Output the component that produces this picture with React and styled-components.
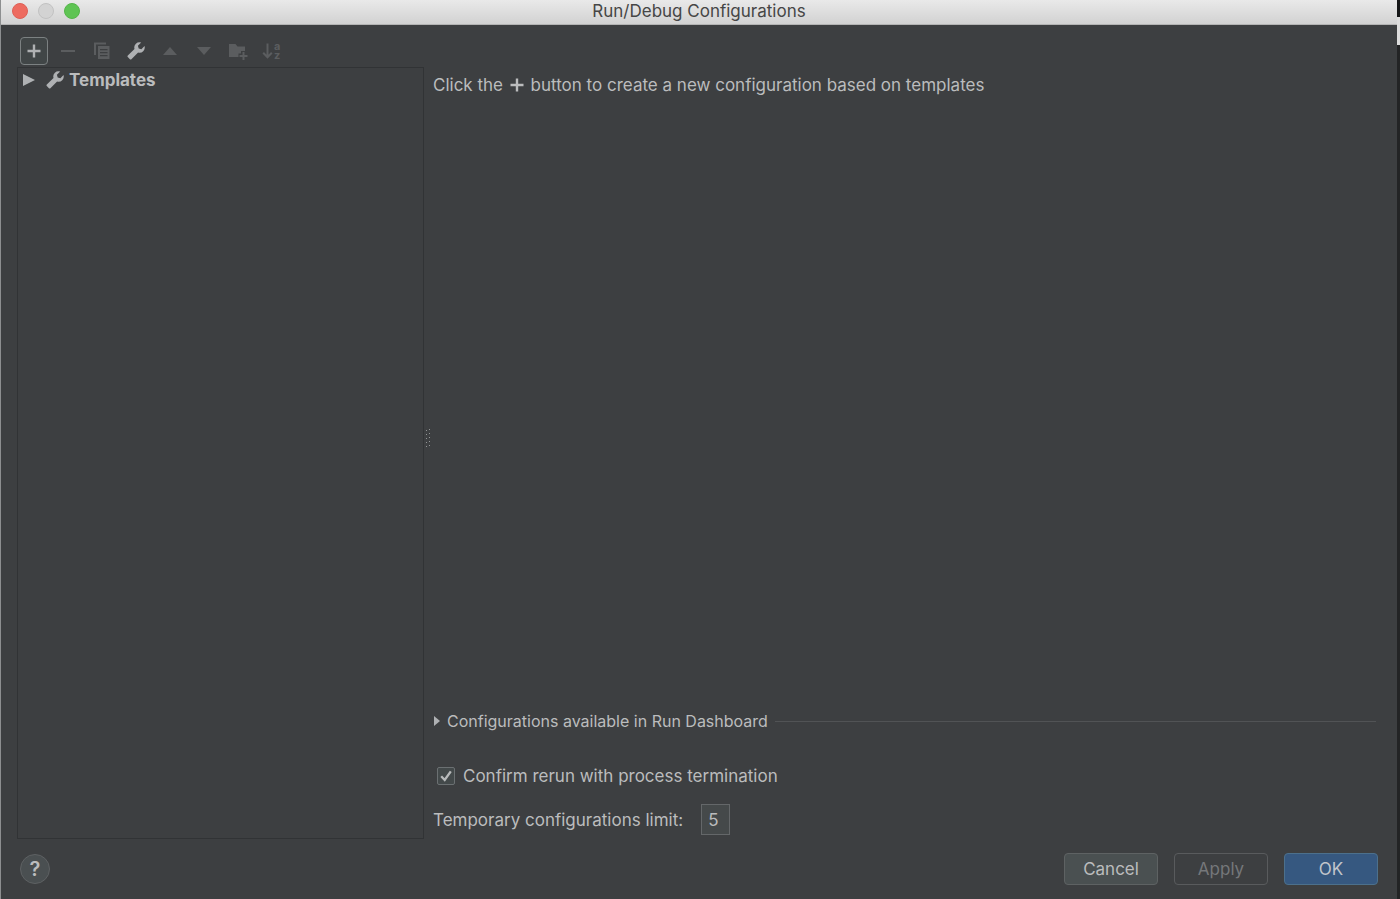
import React, { useState } from 'react';
import styled, { createGlobalStyle } from 'styled-components';

const FONT_FAMILY = "Inter, Roboto, 'Liberation Sans', sans-serif";
const PANEL_COLOR = '#3d3f41';
const TEXT_COLOR = '#bbbcbd';
const ICON_COLOR = '#afb1b3';
const DISABLED_COLOR = '#5b5d5f';
const BORDER_COLOR = '#5e6163';
const LINE_COLOR = '#313335';

const GlobalStyle = createGlobalStyle`
    * {
        box-sizing: border-box;
    }

    body {
        margin: 0;
        background: ${PANEL_COLOR};
    }

    button,
    input {
        font: inherit;
        color: inherit;
    }
`;

const Desktop = styled.div`
    min-height: 100vh;
    display: flex;
    padding: 0 3px 0 1px;
    background:
        linear-gradient(#8d8f90, #8d8f90) left / 1px 100% no-repeat,
        linear-gradient(
                #151617 0,
                #151617 17px,
                #dcdcdc 17px,
                #dcdcdc 45px,
                #232425 45px
            )
            right / 3px 100% no-repeat;
`;

const Dialog = styled.div`
    flex: 1;
    min-width: 0;
    display: flex;
    flex-direction: column;
    background: ${PANEL_COLOR};
    color: ${TEXT_COLOR};
    font-family: ${FONT_FAMILY};
    font-size: 17px;
    line-height: 20px;
`;

const TitleBar = styled.header`
    display: grid;
    grid-template-columns: 1fr auto 1fr;
    align-items: center;
    height: 25px;
    padding: 0 11px 2px;
    background: linear-gradient(#e9e9e9, #d2d2d2);
    border-bottom: 1px solid #b4b4b4;
`;

const Title = styled.h1`
    margin: 0;
    color: #464646;
    font-size: 17px;
    font-weight: 400;
    line-height: 20px;
`;

const WindowControls = styled.div`
    display: flex;
    gap: 10px;
`;

const WindowControl = styled.button`
    width: 16px;
    height: 16px;
    padding: 0;
    border: 1px solid ${(props) => props.$border};
    border-radius: 50%;
    background: ${(props) => props.$color};
`;

const Content = styled.div`
    flex: 1;
    display: flex;
    padding: 12px 20px 14px 16px;
`;

const Sidebar = styled.aside`
    flex: 0 0 407px;
    display: flex;
    flex-direction: column;
    gap: 2px;
`;

const Toolbar = styled.div`
    display: flex;
    gap: 6px;
    padding-left: 3px;
`;

const ToolButton = styled.button`
    display: flex;
    align-items: center;
    justify-content: center;
    width: 28px;
    height: 28px;
    padding: 0;
    border: 1px solid ${(props) => (props.$active ? '#7c8182' : 'transparent')};
    border-radius: 4px;
    background: ${(props) => (props.$active ? '#414647' : 'transparent')};
    color: ${(props) => (props.disabled ? DISABLED_COLOR : ICON_COLOR)};

    svg {
        flex: none;
    }
`;

const Tree = styled.div`
    flex: 1;
    border: 1px solid ${LINE_COLOR};
`;

const TreeRow = styled.button`
    display: flex;
    align-items: center;
    width: 100%;
    height: 24px;
    padding: 0 5px;
    border: 0;
    background: none;
    font-size: 17px;
    font-weight: 700;
    text-align: left;

    .arrow {
        margin-right: 11px;
    }

    .wrench {
        margin-right: 5px;
        color: ${ICON_COLOR};
    }
`;

const Splitter = styled.div`
    flex: 0 0 9px;
    display: flex;
    align-items: center;
    justify-content: flex-start;
`;

const Main = styled.main`
    flex: 1;
    min-width: 0;
    display: flex;
    flex-direction: column;
    padding-bottom: 4px;
`;

const Hint = styled.p`
    flex: 1;
    margin: 0;
    padding-top: 38px;

    svg {
        margin: 0 2px;
        vertical-align: -1px;
    }
`;

const Disclosure = styled.button`
    display: flex;
    align-items: center;
    gap: 7px;
    width: 100%;
    padding: 0 1px;
    border: 0;
    background: none;
    font-size: 16px;
    text-align: left;

    &::after {
        content: '';
        flex: 1;
        height: 1px;
        background: #515355;
    }
`;

const CheckRow = styled.label`
    display: flex;
    align-items: center;
    gap: 8px;
    margin: 35px 0 18px;
    padding-left: 4px;
`;

const CheckBox = styled.span`
    display: grid;
    width: 18px;
    height: 18px;

    > * {
        grid-area: 1 / 1;
    }

    input {
        appearance: none;
        width: 18px;
        height: 18px;
        margin: 0;
        border: 1px solid #6b7072;
        border-radius: 2px;
        background: #43494a;
    }

    svg {
        display: none;
        z-index: 1;
        pointer-events: none;
    }

    input:checked + svg {
        display: block;
    }
`;

const LimitRow = styled.div`
    display: flex;
    align-items: center;
    gap: 18px;
`;

const LimitInput = styled.input`
    width: 29px;
    height: 31px;
    padding: 0 6px;
    border: 1px solid #646769;
    border-radius: 0;
    background: #45494a;
    outline: none;
`;

const Footer = styled.footer`
    display: flex;
    align-items: center;
    gap: 16px;
    padding: 0 19px 14px;
`;

const HelpButton = styled.button`
    width: 30px;
    height: 30px;
    margin-right: auto;
    padding: 0;
    border: 1px solid ${BORDER_COLOR};
    border-radius: 50%;
    background: #4a4f51;
    font-size: 20px;
    font-weight: 600;
`;

const variants = {
    normal: { background: '#4a5051', border: '#5e6263', color: TEXT_COLOR },
    disabled: { background: PANEL_COLOR, border: '#595b5d', color: '#75777a' },
    primary: { background: '#365880', border: '#4c708c', color: '#c0c5cb' },
};

const DialogButton = styled.button`
    width: 94px;
    height: 32px;
    padding: 0;
    border: 1px solid ${(props) => variants[props.$variant].border};
    border-radius: 4px;
    background: ${(props) => variants[props.$variant].background};
    color: ${(props) => variants[props.$variant].color};
`;

const PlusIcon = () => (
    <svg width="14" height="14" viewBox="0 0 14 14" aria-hidden="true">
        <path d="M7 0.5V13.5M0.5 7H13.5" stroke="currentColor" strokeWidth="2.4" />
    </svg>
);

const MinusIcon = () => (
    <svg width="14" height="14" viewBox="0 0 14 14" aria-hidden="true">
        <path d="M0 7H14" stroke="currentColor" strokeWidth="2" />
    </svg>
);

const CopyIcon = () => (
    <svg width="18" height="18" viewBox="0 0 18 18" aria-hidden="true">
        <path d="M1 13V0.5H13V2.5H3V13Z" fill="currentColor" />
        <path
            fillRule="evenodd"
            d="M5 4H16.5V17H5ZM7 7V8.3H14.5V7ZM7 10V11.3H14.5V10ZM7 13V14.3H14.5V13Z"
            fill="currentColor"
        />
    </svg>
);

const WrenchIcon = ({ className }) => (
    <svg className={className} width="18" height="18" viewBox="0 0 18 18" aria-hidden="true">
        <path
            d="M14.2 0.6A5.2 5.2 0 0 0 7.5 7L0.8 13.6A1.1 1.1 0 0 0 0.8 15.1L2.9 17.2A1.1 1.1 0 0 0 4.4 17.2L11.1 10.6A5.2 5.2 0 0 0 17.5 4.1L14.4 7.2L11.7 6.4L10.9 3.7Z"
            fill="currentColor"
        />
    </svg>
);

const UpIcon = () => (
    <svg width="14" height="8" viewBox="0 0 14 8" aria-hidden="true">
        <path d="M7 0L14 8H0Z" fill="currentColor" />
    </svg>
);

const DownIcon = () => (
    <svg width="14" height="8" viewBox="0 0 14 8" aria-hidden="true">
        <path d="M0 0H14L7 8Z" fill="currentColor" />
    </svg>
);

const FolderAddIcon = () => (
    <svg width="20" height="18" viewBox="0 0 20 18" aria-hidden="true">
        <path d="M1 2H7.5L9.5 4.5H17V9H13V11.5H10.5V15H1Z" fill="currentColor" />
        <path d="M15.5 10V18M11.5 14H19.5" stroke="currentColor" strokeWidth="2" />
    </svg>
);

const SortIcon = () => (
    <svg width="20" height="24" viewBox="0 0 20 24" aria-hidden="true">
        <path
            d="M5.5 4.5V18M1.2 13.7L5.5 18.2L9.8 13.7"
            fill="none"
            stroke="currentColor"
            strokeWidth="2"
        />
        <text x="12" y="11" fontSize="11" fontWeight="700" fill="currentColor">
            a
        </text>
        <text x="12" y="20" fontSize="11" fontWeight="700" fill="currentColor">
            z
        </text>
    </svg>
);

const ArrowIcon = ({ className, width, height }) => (
    <svg
        className={className}
        width={width}
        height={height}
        viewBox="0 0 12 12"
        preserveAspectRatio="none"
        aria-hidden="true"
    >
        <path d="M0 0L12 6L0 12Z" fill={ICON_COLOR} />
    </svg>
);

const CheckIcon = () => (
    <svg width="18" height="18" viewBox="0 0 18 18" aria-hidden="true">
        <path d="M4.2 9.2L7.7 13L13.8 4.4" fill="none" stroke="#b8babb" strokeWidth="2.3" />
    </svg>
);

const GripIcon = () => (
    <svg width="8" height="20" viewBox="0 0 8 20" aria-hidden="true">
        {[1, 5, 9, 13, 17].map((y) => (
            <g key={y} fill="#929495">
                <rect x="2" y={y + 1} width="1" height="1" />
                <rect x="5" y={y} width="1" height="1" />
            </g>
        ))}
    </svg>
);

const tools = [
    { label: 'Add New Configuration', icon: PlusIcon, active: true },
    { label: 'Remove Configuration', icon: MinusIcon, disabled: true },
    { label: 'Copy Configuration', icon: CopyIcon, disabled: true },
    { label: 'Edit Templates', icon: WrenchIcon },
    { label: 'Move Up', icon: UpIcon, disabled: true },
    { label: 'Move Down', icon: DownIcon, disabled: true },
    { label: 'Create New Folder', icon: FolderAddIcon, disabled: true },
    { label: 'Sort Configurations', icon: SortIcon, disabled: true },
];

const App = () => {
    const [confirmRerun, setConfirmRerun] = useState(true);
    const [limit, setLimit] = useState('5');

    return (
        <>
            <GlobalStyle />
            <Desktop>
                <Dialog>
                    <TitleBar>
                        <WindowControls>
                            <WindowControl aria-label="Close" $color="#ed6b60" $border="#de6056" />
                            <WindowControl
                                aria-label="Minimize"
                                $color="#d3d3d3"
                                $border="#c2c2c2"
                                disabled
                            />
                            <WindowControl aria-label="Zoom" $color="#5fc454" $border="#55b54a" />
                        </WindowControls>
                        <Title>Run/Debug Configurations</Title>
                    </TitleBar>

                    <Content>
                        <Sidebar>
                            <Toolbar role="toolbar">
                                {tools.map(({ label, icon: Icon, active, disabled }) => (
                                    <ToolButton
                                        key={label}
                                        aria-label={label}
                                        $active={active}
                                        disabled={disabled}
                                    >
                                        <Icon />
                                    </ToolButton>
                                ))}
                            </Toolbar>
                            <Tree>
                                <TreeRow aria-expanded="false">
                                    <ArrowIcon className="arrow" width={12} height={12} />
                                    <WrenchIcon className="wrench" />
                                    Templates
                                </TreeRow>
                            </Tree>
                        </Sidebar>

                        <Splitter>
                            <GripIcon />
                        </Splitter>

                        <Main>
                            <Hint>
                                Click the <PlusIcon /> button to create a new configuration based on
                                templates
                            </Hint>
                            <Disclosure aria-expanded="false">
                                <ArrowIcon width={6} height={10} />
                                Configurations available in Run Dashboard
                            </Disclosure>
                            <CheckRow>
                                <CheckBox>
                                    <input
                                        type="checkbox"
                                        checked={confirmRerun}
                                        onChange={(e) => setConfirmRerun(e.target.checked)}
                                    />
                                    <CheckIcon />
                                </CheckBox>
                                Confirm rerun with process termination
                            </CheckRow>
                            <LimitRow>
                                <label htmlFor="limit">Temporary configurations limit:</label>
                                <LimitInput
                                    id="limit"
                                    type="text"
                                    value={limit}
                                    onChange={(e) => setLimit(e.target.value)}
                                />
                            </LimitRow>
                        </Main>
                    </Content>

                    <Footer>
                        <HelpButton aria-label="Help">?</HelpButton>
                        <DialogButton $variant="normal">Cancel</DialogButton>
                        <DialogButton $variant="disabled" disabled>
                            Apply
                        </DialogButton>
                        <DialogButton $variant="primary">OK</DialogButton>
                    </Footer>
                </Dialog>
            </Desktop>
        </>
    );
};

export default App;
